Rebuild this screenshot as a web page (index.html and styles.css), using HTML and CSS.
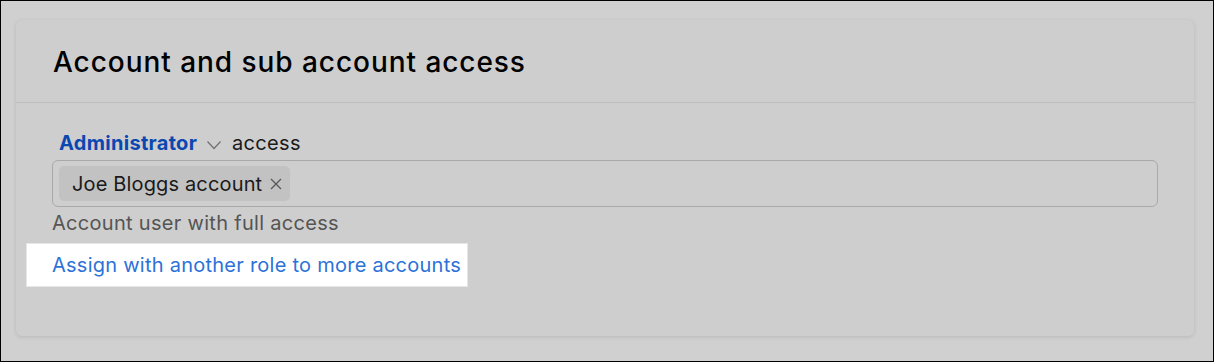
FILE: index.html
```html
<!DOCTYPE html>
<html>
<head>
<meta charset="utf-8">
<link rel="stylesheet" href="styles.css">
</head>
<body>
<div class="frame">
  <section class="card">
    <header class="card-header">
      <h2 class="title">Account and sub account access</h2>
    </header>
    <div class="card-body">
      <div class="role-line">
        <span class="role">Administrator</span>
        <svg class="chev" width="16" height="10" viewBox="0 0 16 10"><path d="M1.5 1.5 L8 8.5 L14.5 1.5" fill="none" stroke="#707070" stroke-width="1.2"/></svg>
        <span class="role-suffix">access</span>
      </div>
      <div class="select-box">
        <span class="chip">Joe Bloggs account<svg class="chip-x" width="12" height="12" viewBox="0 0 12 12"><path d="M1 1 L11 11 M11 1 L1 11" stroke="#5a5a5a" stroke-width="1.4" fill="none"/></svg></span>
      </div>
      <p class="hint">Account user with full access</p>
      <div class="spotlight">
        <a class="link">Assign with another role to more accounts</a>
      </div>
    </div>
  </section>
</div>
</body>
</html>
```
FILE: styles.css
```css
html, body {
  margin: 0;
  padding: 0;
}
body {
  width: 1214px;
  height: 362px;
  overflow: hidden;
  font-family: "Inter", "Liberation Sans", sans-serif;
}
.frame {
  box-sizing: border-box;
  width: 1214px;
  height: 362px;
  border: 1px solid #000;
  background: #d0d0d0;
  padding: 19px 19px 0 15px;
}
.card {
  background: #cecece;
  border-radius: 6px;
  box-shadow: 0 1px 4px rgba(0,0,0,0.12);
  height: 316px;
}
.card-header {
  height: 83px;
  border-bottom: 1px solid #bdbdbd;
  display: flex;
  align-items: center;
  padding-left: 37px;
  padding-top: 2px;
  box-sizing: border-box;
}
.title {
  margin: 0;
  font-size: 28px;
  font-weight: 500;
  color: #000;
  letter-spacing: 0.95px;
}
.card-body {
  padding: 25px 36px 0 36px;
}
.role-line {
  display: flex;
  align-items: center;
  padding-left: 7px;
  height: 30px;
  font-size: 20px;
  letter-spacing: 0.3px;
}
.role {
  color: #0b47b0;
  font-weight: 700;
}
.chev {
  margin: 4px 10px 0 9px;
}
.role-suffix {
  color: #1a1a1a;
}
.select-box {
  margin-top: 2px;
  box-sizing: border-box;
  height: 47px;
  border: 1px solid #a9a9a9;
  border-radius: 6px;
  display: flex;
  align-items: center;
  padding-left: 6px;
}
.chip {
  display: inline-flex;
  align-items: center;
  height: 35px;
  padding: 0 8px 0 13px;
  background: #c2c2c2;
  border-radius: 5px;
  font-size: 20px;
  letter-spacing: 0.15px;
  color: #1a1a1a;
}
.chip-x {
  margin-left: 8px;
  margin-top: 1px;
}
.hint {
  margin: 3px 0 0 0;
  font-size: 20px;
  letter-spacing: 0.3px;
  color: #555;
  line-height: 26px;
}
.spotlight {
  margin: 7px 0 0 -26px;
  width: 442px;
  height: 44px;
  box-sizing: border-box;
  background: #fff;
  border: 1px solid #e6e6e6;
  display: flex;
  align-items: center;
  padding-left: 25px;
}
.link {
  font-size: 20px;
  letter-spacing: 0.25px;
  color: #2c72d8;
}
```
